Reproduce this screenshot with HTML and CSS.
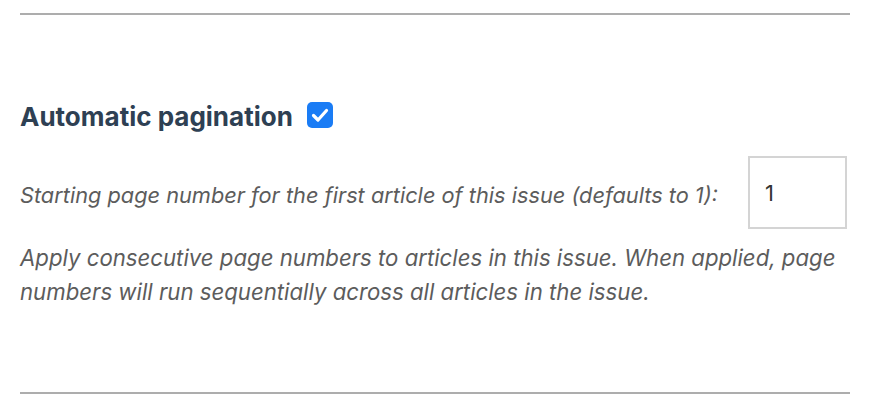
FILE: index.html
```html
<!DOCTYPE html>
<html>
    <head>
        <meta http-equiv="Content-Type" content="text/html; charset=utf-8"/>
        <title>Issue pagination</title>
        <link rel="stylesheet" href="styles.css">
    </head>
    <body>
        <div class="section">
            <hr>
            <h2 class="section-title">
                Automatic pagination
                <label class="check">
                    <input type="checkbox" id="autoPagination" checked>
                    <span class="check-box">
                        <svg viewBox="0 0 26 26" width="26" height="26"><path d="M6.5 13.5 L11 18 L19.5 8.5" fill="none" stroke="#fff" stroke-width="3.2" stroke-linecap="round" stroke-linejoin="round"/></svg>
                    </span>
                </label>
            </h2>
            <fieldset class="start-page">
                <label for="startPage">Starting page number for the first article of this issue (defaults to 1):</label>
                <input type="text" id="startPage" value="1">
            </fieldset>
            <p class="hint">Apply consecutive page numbers to articles in this issue. When applied, page numbers will run sequentially across all articles in the issue.</p>
            <hr>
        </div>
    </body>
</html>
```

FILE: styles.css
```css
body {
    margin: 0;
    background-color: #fff;
    font-family: Inter, "Open Sans", sans-serif;
    color: #5c5c5c;
}
.section {
    padding: 13px 19px 0 20px;
}
hr {
    border: none;
    height: 2px;
    background-color: #adadad;
    margin: 0;
}
.section-title {
    display: flex;
    align-items: center;
    gap: 14px;
    margin: 87px 0 0 0;
    font-size: 26px;
    font-weight: 700;
    color: #2e4053;
    line-height: 30px;
}
.check input {
    display: none;
}
.check-box {
    display: block;
    width: 26px;
    height: 26px;
    margin-bottom: 4px;
    border-radius: 5px;
    background-color: #1a7cf5;
}
.check-box svg {
    display: block;
}
fieldset {
    border: none;
    margin: 0;
    padding: 0;
}
.start-page {
    display: flex;
    align-items: center;
    gap: 30px;
    margin-top: 24px;
}
.start-page label {
    font-style: italic;
    font-size: 21.75px;
    line-height: 30px;
    padding-top: 4px;
}
.start-page input {
    box-sizing: border-box;
    width: 99px;
    height: 73px;
    border: 2px solid #d4d4d4;
    padding: 0 15px;
    font-family: Inter, "Open Sans", sans-serif;
    font-size: 22px;
    color: #333;
    outline: none;
}
.hint {
    margin: 12px 0 83px 0;
    font-style: italic;
    font-size: 22.2px;
    line-height: 34px;
}
```
